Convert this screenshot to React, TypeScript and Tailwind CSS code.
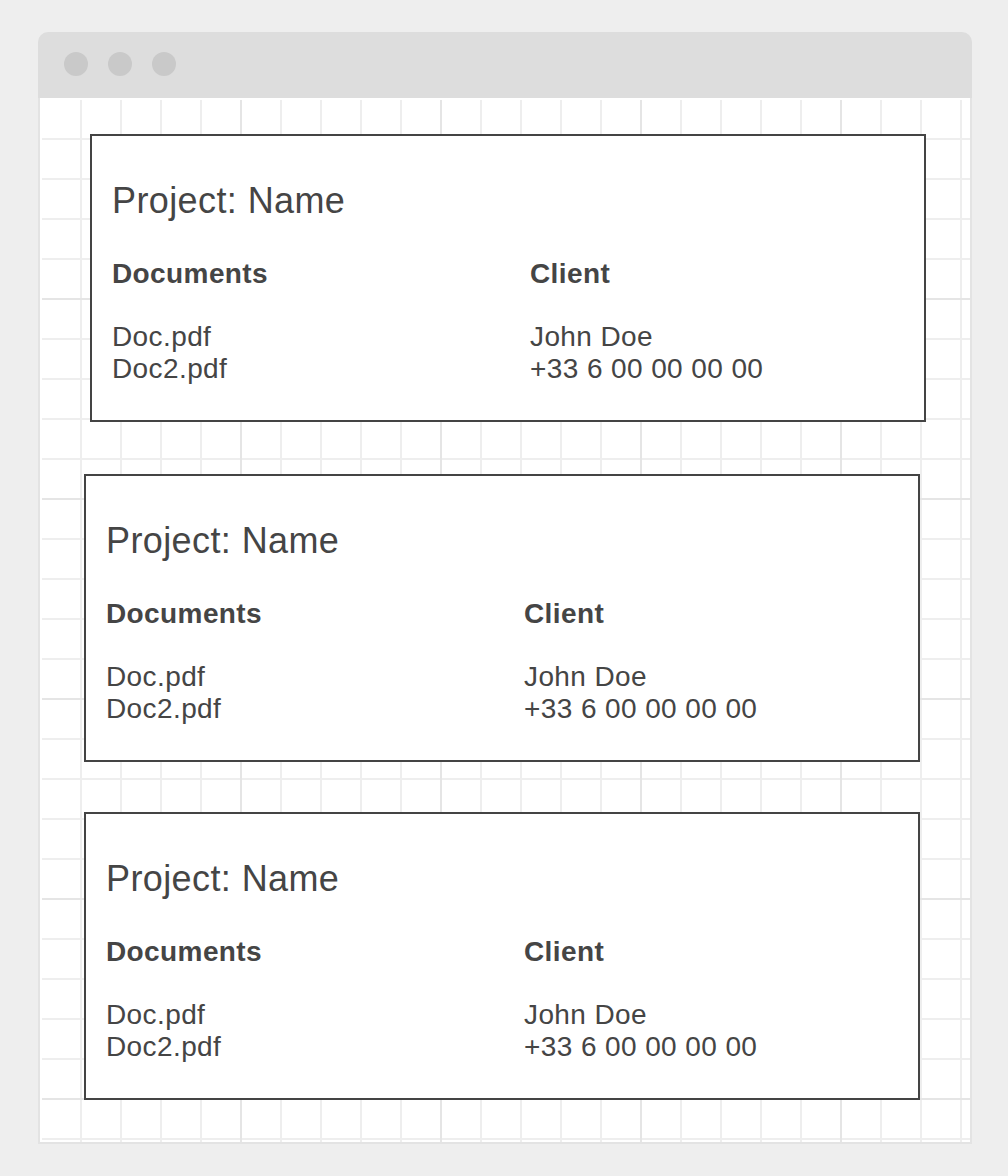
import React from "react";

function Card({ className }: { className: string }) {
  return (
    <div
      className={`w-[836px] h-[288px] border-2 border-[#444444] bg-white pt-[47px] px-5 text-[#454545] ${className}`}
    >
      <div className="text-[36px] leading-[36px] tracking-[0.4px]">Project: Name</div>
      <div className="mt-[39px] grid grid-cols-[418px_1fr] tracking-[0.4px]">
        <div>
          <div className="text-[28px] leading-8 font-bold">Documents</div>
          <div className="mt-[31px] text-[28px] leading-8">
            <div>Doc.pdf</div>
            <div>Doc2.pdf</div>
          </div>
        </div>
        <div>
          <div className="text-[28px] leading-8 font-bold">Client</div>
          <div className="mt-[31px] text-[28px] leading-8">
            <div>John Doe</div>
            <div>+33 6 00 00 00 00</div>
          </div>
        </div>
      </div>
    </div>
  );
}

export default function App() {
  return (
    <div className="min-h-screen h-[1176px] bg-[#eeeeee] pl-[38px] pt-8 font-['Liberation_Sans',Arial,sans-serif]">
      <div className="w-[934px]">
        <div className="h-[66px] rounded-t-[10px] bg-[#dddddd] flex items-start gap-5 pl-[26px] pt-5">
          <span className="w-6 h-6 rounded-full bg-[#c9c9c9]" />
          <span className="w-6 h-6 rounded-full bg-[#c9c9c9]" />
          <span className="w-6 h-6 rounded-full bg-[#c9c9c9]" />
        </div>
        <div className="h-[1046px] border-x-2 border-b-2 border-[#e3e3e3] bg-white pl-[2px] pt-[2px]">
          <div className="h-[1042px] w-[928px] flex flex-col [background-image:linear-gradient(to_right,transparent_198px,#e5e5e5_198px),linear-gradient(to_bottom,transparent_198px,#e5e5e5_198px),linear-gradient(to_right,transparent_38px,#eeeeee_38px),linear-gradient(to_bottom,transparent_38px,#eeeeee_38px)] [background-size:200px_200px,200px_200px,40px_40px,40px_40px]">
            <Card className="ml-[48px] mt-[34px]" />
            <Card className="ml-[42px] mt-[52px]" />
            <Card className="ml-[42px] mt-[50px]" />
          </div>
        </div>
      </div>
    </div>
  );
}
